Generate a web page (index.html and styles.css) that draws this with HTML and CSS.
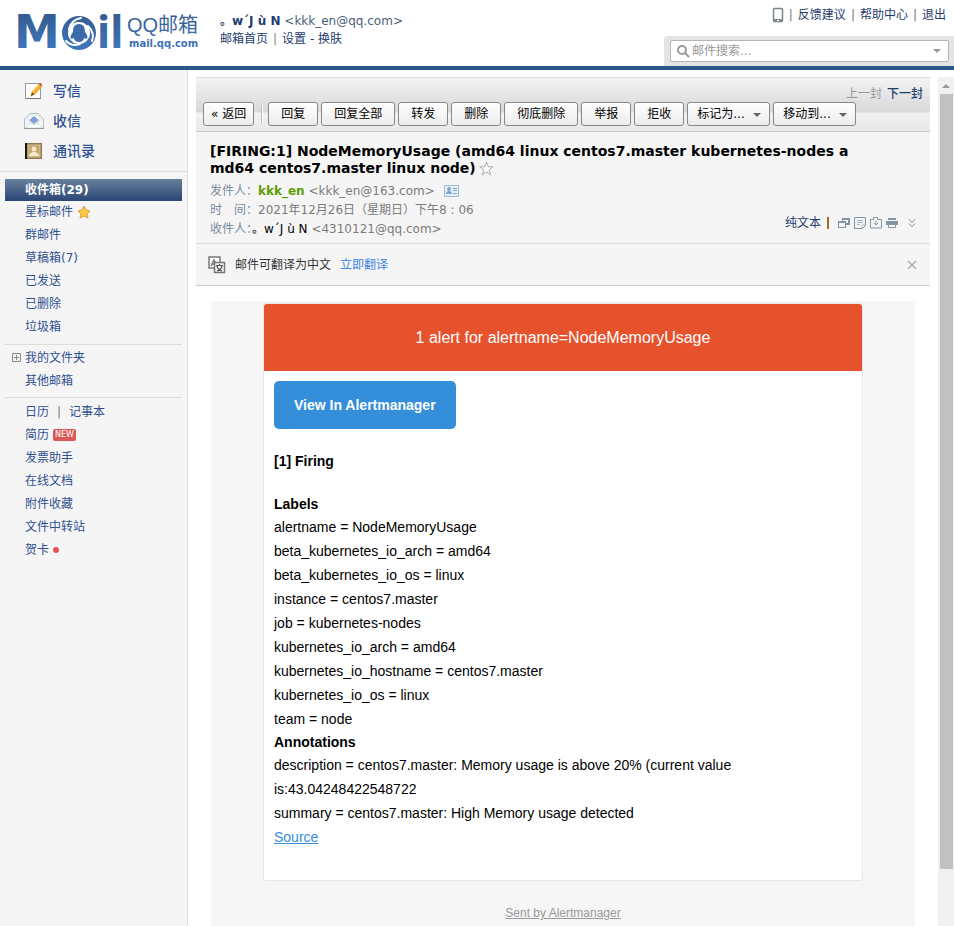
FILE: index.html
```html
<!DOCTYPE html>
<html lang="zh-CN">
<head>
<meta charset="utf-8">
<title>QQ邮箱</title>
<link rel="stylesheet" href="styles.css">
</head>
<body>
<header class="topbar">
  <svg class="logo" width="212" height="66" viewBox="0 0 212 66" role="img" aria-label="QQ Mail">
    <defs>
      <linearGradient id="ink" gradientUnits="userSpaceOnUse" x1="0" y1="15" x2="0" y2="50">
        <stop offset="0" stop-color="#345d92"/><stop offset="1" stop-color="#4076bd"/>
      </linearGradient>
    </defs>
    <g fill="url(#ink)">
      <text class="logo-m" x="14" y="48">M</text>
      <circle cx="79" cy="33" r="17"/>
      <text class="logo-il" x="97" y="48">il</text>
      <text class="logo-cn" x="127" y="32">QQ邮箱</text>
      <text class="logo-url" x="129" y="47">mail.qq.com</text>
    </g>
    <circle cx="79" cy="33" r="11" fill="#fff"/>
    <g fill="none" stroke="#fff" stroke-width="2" stroke-linecap="round">
      <path d="M69 29q2-9 12-11"/>
      <path d="M88 26q7 7 4 15"/>
      <path d="M80 44q-8 3-14-3"/>
    </g>
    <path d="M79 24c-5 0-6 4-6 8c-2 2-3 5-2 7l3-1c0 2 2 4 5 4s5-2 5-4l3 1c1-2 0-5-2-7c0-4-1-8-6-8z" fill="#3b6ba8"/>
  </svg>
  <div class="account">
    <div><a class="nick" href="#">。w´J ù N</a> <span>&lt;kkk_en@qq.com&gt;</span></div>
    <nav><a href="#">邮箱首页</a><i>|</i><a href="#">设置</a> - <a href="#">换肤</a></nav>
  </div>
  <div class="topright">
    <nav class="toplinks">
      <a href="#" aria-label="手机"><svg width="12" height="16" viewBox="0 0 12 16"><rect x="1.500" y="1.500" width="9" height="13" rx="1" fill="#fff" stroke="#7b868f" stroke-width="1.500"/><path d="M1 12h10v3H1z" fill="#7b868f"/><path d="M5 13h2v1H5z" fill="#fff"/></svg></a>
      <i>|</i><a href="#">反馈建议</a><i>|</i><a href="#">帮助中心</a><i>|</i><a href="#">退出</a>
    </nav>
    <form class="search">
      <div class="search-box">
        <svg width="14" height="14" viewBox="0 0 14 14" fill="none" stroke="#999" stroke-width="2"><circle cx="6" cy="6" r="4"/><path d="M9 9l4 4"/></svg>
        <input type="text" aria-label="邮件搜索" placeholder="邮件搜索...">
        <button type="button" aria-label="高级搜索"><svg width="8" height="4" viewBox="0 0 8 4"><path d="M0 0h8L4 4z" fill="#999"/></svg></button>
      </div>
    </form>
  </div>
</header>
<div class="layout">
  <aside class="sidebar">
    <nav class="primary">
      <a href="#"><svg width="20" height="20" viewBox="0 0 20 20"><rect x="1.500" y="2.500" width="15" height="15" fill="#fff" stroke="#999"/><path d="M2 17.500h15" stroke="#777"/><path d="M7 15l1-4 7-8 3 2-7 8z" fill="#f5ae1c" stroke="#c4851a" stroke-width=".6"/><path d="M15 3l1-1q2 0 2 2l-1 1z" fill="#d64132"/><path d="M7 15l1-3 2 1z" fill="#333"/><path d="M9 11l6-7" stroke="#ffe07a"/></svg>写信</a>
      <a href="#"><svg width="20" height="20" viewBox="0 0 20 20"><path d="M.5 8L6 2.500h8L19.500 8v9.500H.5z" fill="#f3f5f7" stroke="#b5babf"/><path d="M3 8l4-4h6l4 4-7 6z" fill="#fff" stroke="#d0d6dc" stroke-width=".7"/><path d="M5 9l5-4 5 4-5 4z" fill="#7fa3d4"/><path d="M1 17l6-5 3 2 3-2 6 5z" fill="#fff" stroke="#c8ccd1" stroke-width=".7"/><path d="M0 17.500h20" stroke="#999"/></svg>收信</a>
      <a href="#"><svg width="20" height="20" viewBox="0 0 20 20"><rect x="1" y="2" width="17" height="16" fill="#8d7653"/><path d="M1 2h2v16H1z" fill="#1c1712"/><rect x="4" y="4" width="12" height="12" fill="#c7a36b" stroke="#dfc798"/><circle cx="10" cy="8" r="2.500" fill="#f5ead0"/><path d="M5 15q0-3 4-4h2q4 1 4 4z" fill="#f5ead0"/></svg>通讯录</a>
    </nav>
    <nav class="folders">
      <a class="current" href="#">收件箱(29)</a>
      <a href="#">星标邮件 <svg width="14" height="14" viewBox="0 0 14 14"><path d="M7 1l2 4 4 1-3 3 1 4-4-2-4 2 1-4-3-3 4-1z" fill="#ffc945" stroke="#e0a13f"/></svg></a>
      <a href="#">群邮件</a>
      <a href="#">草稿箱(7)</a>
      <a href="#">已发送</a>
      <a href="#">已删除</a>
      <a href="#">垃圾箱</a>
    </nav>
    <nav class="folders ruled">
      <a class="expand" href="#"><svg width="9" height="9" viewBox="0 0 9 9" fill="none" stroke="#888"><path d="M.5.5h8v8h-8zM2 4.500h5M4.500 2v5"/></svg>我的文件夹</a>
      <a href="#">其他邮箱</a>
    </nav>
    <nav class="folders ruled">
      <div class="pair"><a href="#">日历</a><i>|</i><a href="#">记事本</a></div>
      <a href="#">简历 <b class="new">NEW</b></a>
      <a href="#">发票助手</a>
      <a href="#">在线文档</a>
      <a href="#">附件收藏</a>
      <a href="#">文件中转站</a>
      <a href="#">贺卡 <b class="dot"></b></a>
    </nav>
  </aside>
  <main class="mail">
    <div class="toolbar">
      <div class="pager"><span>上一封</span><a href="#">下一封</a></div>
      <div class="actions">
        <button class="btn back" type="button">« 返回</button>
        <span class="sep"></span>
        <button class="btn" type="button">回复</button>
        <button class="btn" type="button">回复全部</button>
        <button class="btn" type="button">转发</button>
        <button class="btn" type="button">删除</button>
        <button class="btn" type="button">彻底删除</button>
        <button class="btn" type="button">举报</button>
        <button class="btn" type="button">拒收</button>
        <span class="menu"><select class="btn" aria-label="标记为"><option>标记为...</option></select><svg width="8" height="4" viewBox="0 0 8 4"><path d="M0 0h8L4 4z" fill="#666"/></svg></span>
        <span class="menu"><select class="btn" aria-label="移动到"><option>移动到...</option></select><svg width="8" height="4" viewBox="0 0 8 4"><path d="M0 0h8L4 4z" fill="#666"/></svg></span>
      </div>
    </div>
    <section class="info">
      <h1>[FIRING:1] NodeMemoryUsage (amd64 linux centos7.master kubernetes-nodes a<br>md64 centos7.master linux node)<svg width="15" height="15" viewBox="0 0 15 15"><path d="M7.500 1l1.700 4.800h5l-4 3 1.500 5-4.200-3-4.200 3 1.500-5-4-3h5z" fill="#fff" stroke="#aaa"/></svg></h1>
      <div class="meta-row">
        <div class="meta">
          <p><span class="label">发件人：</span><b class="sender">kkk_en</b> &lt;kkk_en@163.com&gt; <svg width="15" height="12" viewBox="0 0 15 12"><path d="M.5.5h14v11H.5z" fill="#e9f1f9" stroke="#9bb9d6"/><circle cx="5" cy="4" r="2" fill="#7fa5cb"/><path d="M2 9q0-3 3-3t3 3zM9 3h4v1H9zM9 5h4v1H9zM9 8h4v1H9z" fill="#7fa5cb"/></svg></p>
          <p><span class="label">时　间：</span>2021年12月26日（星期日）下午8 : 06</p>
          <p><span class="label">收件人：</span><span class="rcpt">。w´J ù N</span> &lt;4310121@qq.com&gt;</p>
        </div>
        <div class="tools">
          <a href="#">纯文本</a><span class="bar"></span>
          <svg width="12" height="12" viewBox="0 0 12 12"><path d="M4 1h8v7H8V6h2V3H5v1H4z" fill="#8195a6"/><path d="M0 4h8v7H0zM1 6v4h6V6z" fill="#8195a6" fill-rule="evenodd"/></svg>
          <svg width="12" height="12" viewBox="0 0 12 12" fill="none" stroke="#8195a6"><path d="M.5.5h11v8l-3 3h-8z"/><path d="M3 3.500h6M3 5.500h6M3 7.500h3M8 11V8h3" stroke="#a9b7c3"/></svg>
          <svg width="12" height="12" viewBox="0 0 12 12" fill="none" stroke="#8195a6"><path d="M.5 2.500h3v-2h4v2h4v8.500H.5zM6 4v4M4 6l2 2 2-2"/></svg>
          <svg width="12" height="12" viewBox="0 0 12 12"><path d="M2 1h8v2H2zM0 4h12v4H0z" fill="#8195a6"/><path d="M2.500 7.500h7v3h-7z" fill="#fff" stroke="#8195a6"/></svg>
          <svg class="more" width="8" height="8" viewBox="0 0 8 8" fill="none" stroke="#888"><path d="M1 .5l3 3 3-3M1 4.500l3 3 3-3"/></svg>
        </div>
      </div>
    </section>
    <section class="translate">
      <svg width="18" height="18" viewBox="0 0 18 18"><path d="M1 1h11v11H1z" fill="#fff" stroke="#777" stroke-width="1.500"/><path d="M3 10l3-6 3 6M4 8h4" fill="none" stroke="#777" stroke-width="1.500"/><path d="M6.500 6.500h10v10h-10z" fill="#f5f5f5" stroke="#777" stroke-width="1.500"/><path d="M8 9.500h7M11.500 8v1.500M14 10q-1 4-5 5M9 10q1 4 5 5" fill="none" stroke="#555" stroke-width="1.200"/></svg>
      <span>邮件可翻译为中文</span>
      <a href="#">立即翻译</a>
      <button type="button" aria-label="关闭"><svg width="10" height="10" viewBox="0 0 10 10" fill="none" stroke="#aab2bb" stroke-width="1.500"><path d="M1 1l8 8M9 1L1 9"/></svg></button>
    </section>
    <article class="content">
      <div class="card">
        <div class="alert">1 alert for alertname=NodeMemoryUsage</div>
        <div class="card-body">
          <a class="view" href="#">View In Alertmanager</a>
          <h2>[1] Firing</h2>
          <h3>Labels</h3>
          <p>alertname = NodeMemoryUsage</p>
          <p>beta_kubernetes_io_arch = amd64</p>
          <p>beta_kubernetes_io_os = linux</p>
          <p>instance = centos7.master</p>
          <p>job = kubernetes-nodes</p>
          <p>kubernetes_io_arch = amd64</p>
          <p>kubernetes_io_hostname = centos7.master</p>
          <p>kubernetes_io_os = linux</p>
          <p>team = node</p>
          <h3>Annotations</h3>
          <p>description = centos7.master: Memory usage is above 20% (current value<br>is:43.04248422548722</p>
          <p>summary = centos7.master: High Memory usage detected</p>
          <p><a href="#">Source</a></p>
        </div>
      </div>
      <a class="sent" href="#">Sent by Alertmanager</a>
    </article>
  </main>
  <div class="scroll">
    <svg width="8" height="4" viewBox="0 0 8 4"><path d="M0 4h8L4 0z" fill="#999"/></svg>
    <div class="thumb"></div>
  </div>
</div>
</body>
</html>
```
FILE: styles.css
```css
* { box-sizing: border-box; }
body {
  margin: 0;
  height: 100vh;
  overflow: hidden;
  display: flex;
  flex-direction: column;
  background: #fff;
  color: #1e3c6e;
  font: 12px/18px "DejaVu Sans", "Noto Sans CJK SC", sans-serif;
}
a { color: inherit; text-decoration: none; }
i { font-style: normal; }
p, h1, h2, h3 { margin: 0; }
button, input, select { font: inherit; }
svg { flex: none; }

.topbar {
  flex: none;
  display: flex;
  height: 70px;
  border-bottom: 4px solid #2a5587;
}
.logo-m { font: bold 46px "DejaVu Sans", sans-serif; }
.logo-il { font: bold 44px "Noto Sans", sans-serif; }
.logo-cn { font: 20px "Liberation Sans", "Noto Sans CJK SC", sans-serif; }
.logo-url { font: bold 10px "DejaVu Sans", sans-serif; }
.account { padding: 12px 0 0 8px; white-space: nowrap; }
.account span { color: #4b5f7c; }
.account i { margin: 0 5px; color: #888; }
.nick { font-weight: bold; }
.topright {
  flex: 1;
  display: flex;
  flex-direction: column;
  justify-content: space-between;
  align-items: flex-end;
}
.toplinks { display: flex; align-items: center; padding: 6px 8px 0 0; }
.toplinks i { margin: 0 5px; color: #777; }
.toplinks svg { display: block; }
.search {
  width: 290px;
  padding: 4px 5px 4px 6px;
  background: #e4e4e4;
  border-radius: 4px 0 0 0;
}
.search-box {
  display: flex;
  align-items: center;
  height: 22px;
  padding: 0 7px 0 5px;
  background: #fff;
  border: 1px solid #b5b5b5;
  border-radius: 2px;
}
.search input {
  flex: 1;
  min-width: 0;
  padding: 0 2px;
  border: 0;
  background: none;
  outline: 0;
}
.search input::placeholder { color: #999; }
.search button { display: flex; padding: 0; border: 0; background: none; }

.layout { flex: 1; display: flex; min-height: 0; }
.sidebar {
  flex: none;
  width: 188px;
  padding: 6px 0;
  background: #f5f5f5;
  border-right: 1px solid #dcdfe3;
  color: #2f5090;
}
.primary { padding: 0 0 5px 24px; border-bottom: 1px solid #dcdcdc; margin-bottom: 7px; }
.primary a {
  display: flex;
  align-items: center;
  gap: 9px;
  height: 30px;
  font-size: 14px;
  font-weight: 500;
}
.folders { margin: 0 5px; }
.folders > * { display: flex; align-items: center; gap: 4px; height: 23px; padding-left: 20px; }
.folders .current {
  height: 22px;
  margin-bottom: -1px;
  color: #fff;
  font-weight: bold;
  background: linear-gradient(#68809c, #2a4675);
}
.ruled { margin-top: 6px; padding-top: 1px; border-top: 1px solid #dcdcdc; }
.ruled + .ruled { margin-top: 5px; padding-top: 2px; }
.folders .expand { padding-left: 7px; }
.pair i { margin: 0 4px; color: #777; }
.new {
  padding: 0 2px;
  border-radius: 2px;
  background: #dc5757;
  color: #fff;
  font: 8px/12px "DejaVu Sans", sans-serif;
}
.dot { width: 6px; height: 6px; border-radius: 50%; background: #e05656; }

.mail {
  flex: 1;
  min-width: 0;
  margin: 7px 8px 0;
  display: flex;
  flex-direction: column;
}
.toolbar {
  flex: none;
  height: 55px;
  padding: 7px 7px 0;
  border-top: 1px solid #ddd;
  border-bottom: 1px solid #c8ccd4;
  background: linear-gradient(#f3f3f3, #d8d8d8 34px, #f2f2f2 35px, #e8e8e8);
}
.pager { display: flex; justify-content: flex-end; gap: 5px; height: 17px; font-weight: 500; }
.pager span { color: #999; font-weight: normal; }
.actions { display: flex; gap: 3px; align-items: center; }
.btn {
  height: 24px;
  padding: 0 12px;
  border: 1px solid #888;
  border-radius: 3px;
  background: linear-gradient(#fff, #ececec);
  color: #000;
  white-space: nowrap;
}
.back { padding: 0 7px; }
.sep { width: 2px; height: 18px; margin: 0 2px 0 4px; border-left: 1px solid #bbb; background: #fff; }
.menu { position: relative; }
.menu select { display: block; width: 83px; padding: 0 9px; appearance: none; }
.menu svg { position: absolute; right: 9px; top: 11px; pointer-events: none; }

.info { flex: none; padding: 11px 14px 4px; background: #f5f5f5; border-bottom: 1px solid #d9dce0; }
h1 { color: #000; font-size: 14px; line-height: 17px; }
h1 svg { margin-left: 3px; vertical-align: -3px; }
.meta-row { display: flex; justify-content: space-between; align-items: flex-end; }
.meta { padding-top: 5px; color: #7b7b7b; line-height: 19px; }
.meta svg { vertical-align: -2px; margin-left: 5px; }
.label { color: #788c9f; }
.sender { color: #5d9d05; }
.rcpt { color: #000; }
.tools { display: flex; align-items: center; gap: 4px; padding-bottom: 7px; }
.bar { width: 2px; height: 12px; margin: 0 5px 0 2px; background: #a66a20; }
.more { margin-left: 6px; }
.translate {
  flex: none;
  display: flex;
  align-items: center;
  gap: 9px;
  height: 42px;
  padding: 0 13px 0 12px;
  background: #f5f5f5;
  border-bottom: 1px solid #c8ccd8;
  color: #333;
}
.translate a { color: #3f86e0; }
.translate button { display: flex; margin-left: auto; padding: 0; border: 0; background: none; }

.content {
  flex: 1;
  margin: 15px 15px 0;
  padding-top: 2px;
  background: #f6f6f6;
  color: #000;
  font: 14px/24px "Liberation Sans", sans-serif;
  text-align: center;
}
.card {
  max-width: 600px;
  margin: 0 auto 19px;
  border: 1px solid #e9e9e9;
  border-radius: 3px;
  background: #fff;
  text-align: left;
}
.alert {
  padding: 20px;
  background: #e6522c;
  border-radius: 3px 3px 0 0;
  color: #fff;
  font-size: 16px;
  line-height: 27px;
  text-align: center;
}
.card-body { padding: 10px 10px 31px; }
.view {
  display: inline-block;
  padding: 12px 20px;
  border-radius: 5px;
  background: #348eda;
  color: #fff;
  font-weight: bold;
  vertical-align: top;
}
h2 { margin: 20px 0; font-size: 14px; line-height: 24px; }
h3 { font-size: 14px; line-height: 22px; }
.card p a { color: #348eda; text-decoration: underline; }
.sent { color: #999; font-size: 12px; text-decoration: underline; }

.scroll {
  flex: none;
  width: 16px;
  margin-top: 7px;
  padding-top: 7px;
  display: flex;
  flex-direction: column;
  align-items: center;
  gap: 6px;
  background: #f1f1f1;
}
.thumb { width: 13px; height: 92%; background: #c1c1c1; }
```
